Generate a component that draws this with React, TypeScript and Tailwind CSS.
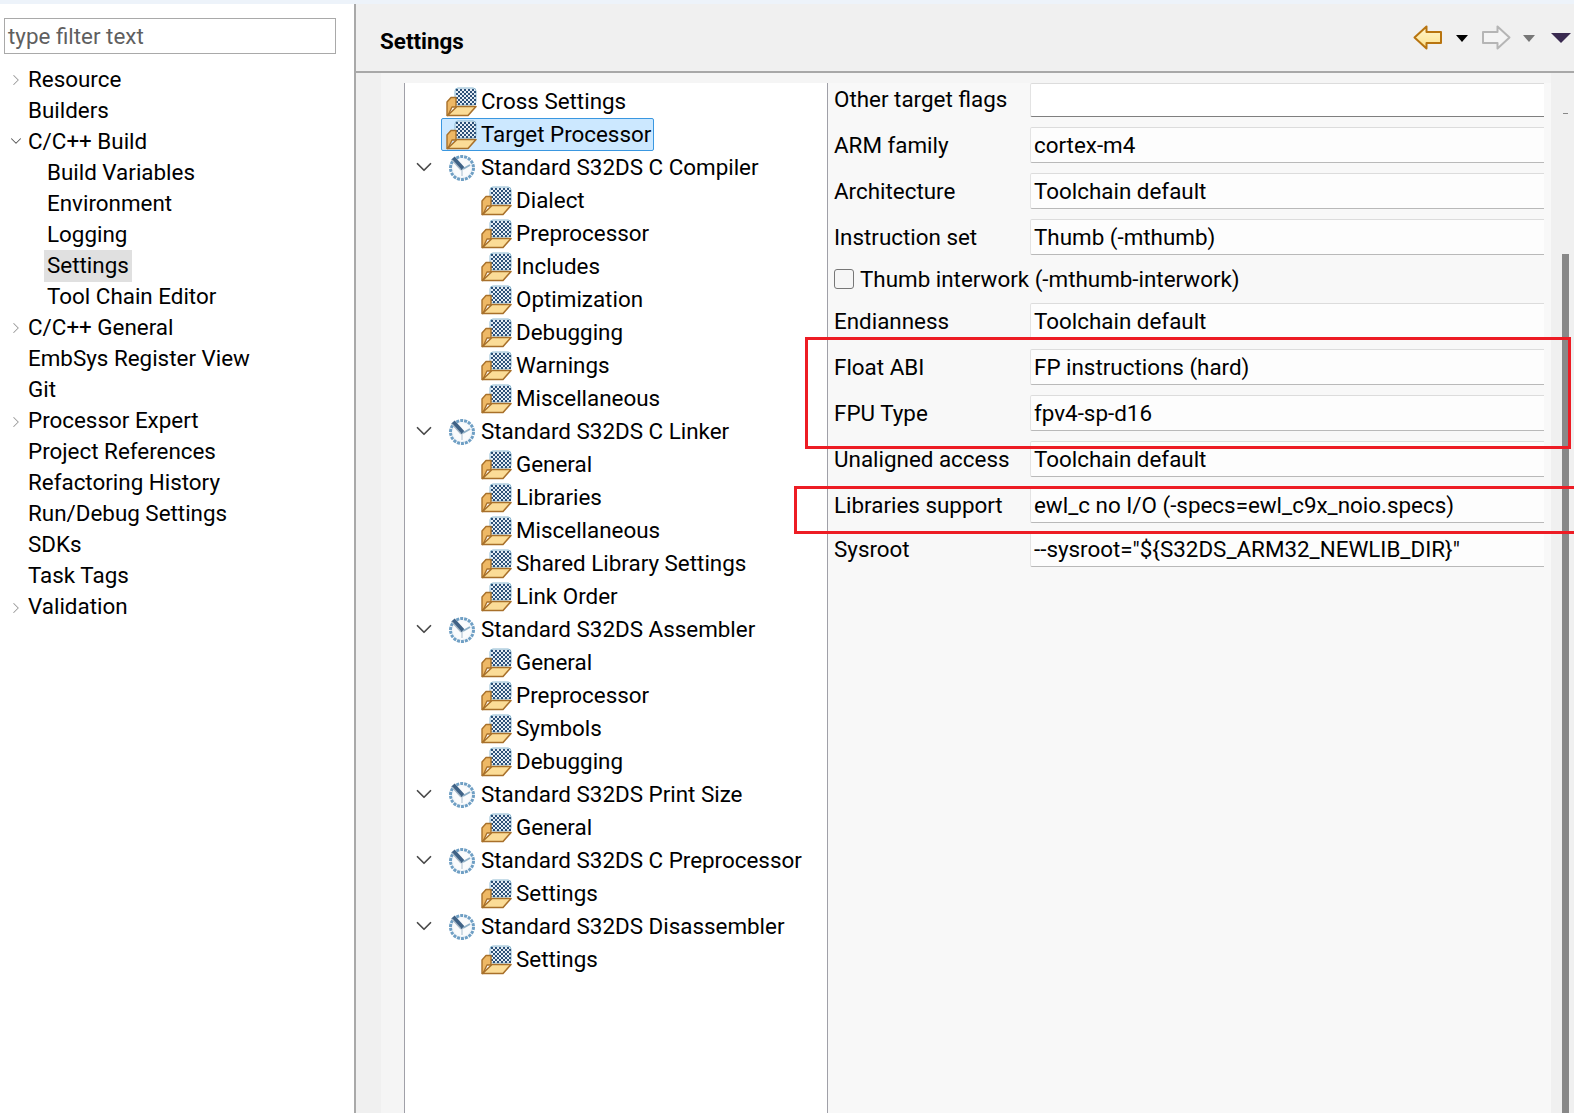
import { ChevronDown, ChevronRight } from 'lucide-react';

const sideItems = [
  { label: 'Resource', depth: 0, arrow: 'right' },
  { label: 'Builders', depth: 0 },
  { label: 'C/C++ Build', depth: 0, arrow: 'down' },
  { label: 'Build Variables', depth: 1 },
  { label: 'Environment', depth: 1 },
  { label: 'Logging', depth: 1 },
  { label: 'Settings', depth: 1, selected: true },
  { label: 'Tool Chain Editor', depth: 1 },
  { label: 'C/C++ General', depth: 0, arrow: 'right' },
  { label: 'EmbSys Register View', depth: 0 },
  { label: 'Git', depth: 0 },
  { label: 'Processor Expert', depth: 0, arrow: 'right' },
  { label: 'Project References', depth: 0 },
  { label: 'Refactoring History', depth: 0 },
  { label: 'Run/Debug Settings', depth: 0 },
  { label: 'SDKs', depth: 0 },
  { label: 'Task Tags', depth: 0 },
  { label: 'Validation', depth: 0, arrow: 'right' },
];

const toolTree = [
  { label: 'Cross Settings', tool: false, child: false },
  { label: 'Target Processor', tool: false, child: false, selected: true },
  { label: 'Standard S32DS C Compiler', tool: true, child: false },
  { label: 'Dialect', tool: false, child: true },
  { label: 'Preprocessor', tool: false, child: true },
  { label: 'Includes', tool: false, child: true },
  { label: 'Optimization', tool: false, child: true },
  { label: 'Debugging', tool: false, child: true },
  { label: 'Warnings', tool: false, child: true },
  { label: 'Miscellaneous', tool: false, child: true },
  { label: 'Standard S32DS C Linker', tool: true, child: false },
  { label: 'General', tool: false, child: true },
  { label: 'Libraries', tool: false, child: true },
  { label: 'Miscellaneous', tool: false, child: true },
  { label: 'Shared Library Settings', tool: false, child: true },
  { label: 'Link Order', tool: false, child: true },
  { label: 'Standard S32DS Assembler', tool: true, child: false },
  { label: 'General', tool: false, child: true },
  { label: 'Preprocessor', tool: false, child: true },
  { label: 'Symbols', tool: false, child: true },
  { label: 'Debugging', tool: false, child: true },
  { label: 'Standard S32DS Print Size', tool: true, child: false },
  { label: 'General', tool: false, child: true },
  { label: 'Standard S32DS C Preprocessor', tool: true, child: false },
  { label: 'Settings', tool: false, child: true },
  { label: 'Standard S32DS Disassembler', tool: true, child: false },
  { label: 'Settings', tool: false, child: true },
];

const fieldsTop = [
  { label: 'ARM family', value: 'cortex-m4' },
  { label: 'Architecture', value: 'Toolchain default' },
  { label: 'Instruction set', value: 'Thumb (-mthumb)' },
];

const fieldsBottom = [
  { label: 'Endianness', value: 'Toolchain default' },
  { label: 'Float ABI', value: 'FP instructions (hard)' },
  { label: 'FPU Type', value: 'fpv4-sp-d16' },
  { label: 'Unaligned access', value: 'Toolchain default' },
  { label: 'Libraries support', value: 'ewl_c no I/O (-specs=ewl_c9x_noio.specs)' },
];

// dither cells of the little settings page sitting in the folder
const cells = Array.from({ length: 80 }, (_, i) => i);

function FolderIcon() {
  return (
    <svg width="31" height="30" viewBox="0 0 31 30" className="shrink-0">
      <rect x="9" y="1" width="21" height="17" rx="3" fill="#e6eef5" stroke="#8db8d0" strokeWidth="1" />
      {cells.map((i) => {
        const cx = i % 10;
        const cy = Math.floor(i / 10);
        if ((cx + cy) % 2 === 1) return null;
        return <rect key={i} x={10 + cx * 2} y={2 + cy * 2} width="2" height="2" fill="#2c5078" />;
      })}
      <path d="M1 28.5 V15 L5 10.5 H10 V20 H6 L2 28.5 Z" fill="#eeb865" stroke="#a8702a" strokeWidth="1.4" strokeLinejoin="round" />
      <path d="M11 19.5 H30 L22 28.5 H1.5 Z" fill="#fbdc97" stroke="#a8702a" strokeWidth="1.6" strokeLinejoin="round" />
    </svg>
  );
}

function ToolIcon() {
  return (
    <svg width="28" height="28" viewBox="0 0 28 28" className="shrink-0">
      <circle cx="14" cy="14" r="11.5" fill="#f4f7fa" stroke="#6f9fc4" strokeWidth="3" strokeDasharray="3 1" />
      <circle cx="14" cy="14" r="8.8" fill="#fafbfc" />
      <path d="M5 4 L15 15" stroke="#3f6286" strokeWidth="4.5" />
      <path d="M4 6 L13 16" stroke="#a9bac9" strokeWidth="1.2" />
      <path d="M15 15 L22 11" stroke="#8fb0c8" strokeWidth="2" />
      <path d="M14 16 V22" stroke="#c3d2de" strokeWidth="1.5" />
    </svg>
  );
}

function SideRow({ item }: { item: (typeof sideItems)[number] }) {
  return (
    <div className="relative flex h-[31.05px] items-center" style={{ paddingLeft: item.depth === 0 ? 28 : 44 }}>
      {item.arrow === 'right' && <ChevronRight size={18} strokeWidth={1.4} className="absolute left-[7px] top-[7px] text-[#9a9a9a]" />}
      {item.arrow === 'down' && <ChevronDown size={18} strokeWidth={1.4} className="absolute left-[7px] top-[6px] text-[#555]" />}
      <span className={`h-[32px] leading-[30px] ${item.selected ? 'bg-[#e0e0e0] px-[3px]' : item.depth === 1 ? 'pl-[3px]' : ''}`}>{item.label}</span>
    </div>
  );
}

function ToolRow({ item }: { item: (typeof toolTree)[number] }) {
  return (
    <div className="relative flex h-[33px] items-center" style={{ paddingLeft: item.child ? 76 : 41 }}>
      {item.tool && <ChevronDown size={26} strokeWidth={1.6} className="absolute left-[6px] top-[3px] text-[#4a4a4a]" />}
      <div className={`flex h-[33px] items-center ${item.selected ? 'border border-[#3a97e0] rounded-[2px] bg-[#cce8ff] -ml-[5px] pl-[4px] pr-[2px]' : ''}`}>
        {item.tool ? <div className="w-[31px] flex justify-center"><ToolIcon /></div> : <FolderIcon />}
        <span className="ml-[4px] whitespace-nowrap">{item.label}</span>
      </div>
    </div>
  );
}

function Field({ label, value, dark, short }: { label: string; value: string; dark?: boolean; short?: boolean }) {
  return (
    <div className={`flex items-center ${short ? 'h-[34px]' : 'h-[36px]'}`}>
      <span className={`w-[196px] shrink-0 whitespace-nowrap ${short ? '' : 'pt-[2px]'}`}>{label}</span>
      <div className={`flex h-full flex-1 items-center rounded-l-[2px] border-l border-t border-b border-l-[#e3e3e3] border-t-[#dcdcdc] bg-[#fdfdfd] pl-[3px] pt-[2px] whitespace-nowrap ${dark ? 'border-b-[#7f7f7f] bg-white' : 'border-b-[#b9b9b9]'}`}>
        {value}
      </div>
    </div>
  );
}

export default function App() {
  return (
    <div className="relative flex h-[1113px] w-[1574px] flex-col overflow-hidden bg-white text-[22.4px] text-black font-['Roboto',sans-serif]">
      <div className="h-[4px] shrink-0 bg-[#edf3fa]" />
      <div className="flex min-h-0 flex-1">
        <aside className="w-[356px] shrink-0 border-r-[2px] border-r-[#a9a9a9] bg-white pt-[14px]">
          <div className="mx-[4px] flex h-[36px] w-[332px] items-center border border-[#a9a9a9] pl-[3px] pt-[1px] text-[#5f5f5f]">type filter text</div>
          <div className="mt-[10px]">
            {sideItems.map((s) => <SideRow key={s.label} item={s} />)}
          </div>
        </aside>
        <main className="flex min-w-0 flex-1 flex-col bg-[#f0f0f0]">
          <header className="relative flex h-[69px] shrink-0 items-center border-b-[2px] border-b-[#a8a8a8] pl-[24px] pt-[8px] font-bold">
            Settings
            <div className="absolute left-[1057px] top-[21px] flex items-center">
              <svg width="30" height="26" viewBox="0 0 30 26">
                <defs>
                  <linearGradient id="bk" x1="0" y1="0" x2="0" y2="1">
                    <stop offset="0" stopColor="#fff6cf" />
                    <stop offset="1" stopColor="#fde08a" />
                  </linearGradient>
                </defs>
                <path d="M1.5 12.5 L13.5 1.5 V7 H28 V18 H13.5 V23.5 Z" fill="url(#bk)" stroke="#b8740f" strokeWidth="2" strokeLinejoin="round" />
              </svg>
              <div className="ml-[13px] h-0 w-0 border-x-[6px] border-t-[7px] border-x-transparent border-t-black" />
              <svg width="30" height="26" viewBox="0 0 30 26" className="ml-[13px]">
                <path d="M28.5 12.5 L16.5 1.5 V7 H2 V18 H16.5 V23.5 Z" fill="#f4f4f4" stroke="#b5b5b5" strokeWidth="2" strokeLinejoin="round" />
              </svg>
              <div className="ml-[12px] h-0 w-0 border-x-[6px] border-t-[7px] border-x-transparent border-t-[#777]" />
              <div className="ml-[16px] h-0 w-0 border-x-[10px] border-t-[10px] border-x-transparent border-t-[#3a2a50]" />
            </div>
          </header>
          <div className="flex min-h-0 flex-1 pl-[25px]">
            <div className="flex min-w-0 flex-1 bg-[#f5f5f5] pt-[10px]">
              <div className="w-[23px] shrink-0" />
              <div className="h-full w-[424px] shrink-0 border-x-[1px] border-x-[#a0a0a8] bg-white">
                <div className="pt-[2px]">
                  {toolTree.map((t, i) => <ToolRow key={i} item={t} />)}
                </div>
              </div>
              <div className="h-full flex-1 bg-[#f8f8f8] pl-[6px] pr-[7px]">
                <Field label="Other target flags" value="" dark short />
                <div className="mt-[10px] flex flex-col gap-[10px]">
                  {fieldsTop.map((f) => <Field key={f.label} label={f.label} value={f.value} />)}
                </div>
                <label className="mt-[6px] flex h-[36px] items-center">
                  <span className="h-[20px] w-[20px] rounded-[3px] border border-[#777] bg-[#f6f6f6]" />
                  <span className="ml-[6px] whitespace-nowrap pt-[2px]">Thumb interwork (-mthumb-interwork)</span>
                </label>
                <div className="mt-[6px] flex flex-col gap-[10px]">
                  {fieldsBottom.map((f) => <Field key={f.label} label={f.label} value={f.value} />)}
                </div>
                <div className="mt-[8px]">
                  <Field label="Sysroot" value={'--sysroot="${S32DS_ARM32_NEWLIB_DIR}"'} />
                </div>
              </div>
            </div>
            <div className="relative w-[23px] shrink-0 bg-[#f0f0f0]">
              <div className="absolute left-[12px] top-[40px] h-[1px] w-[5px] bg-[#888]" />
              <div className="absolute left-[11px] top-[181px] bottom-0 w-[7px] bg-[#888]" />
            </div>
          </div>
        </main>
      </div>
      <div className="absolute left-[805px] top-[337px] h-[112px] w-[766px] border-[3px] border-[#ed1c24]" />
      <div className="absolute left-[794px] top-[486px] h-[48px] w-[800px] border-[3px] border-[#ed1c24]" />
    </div>
  );
}
